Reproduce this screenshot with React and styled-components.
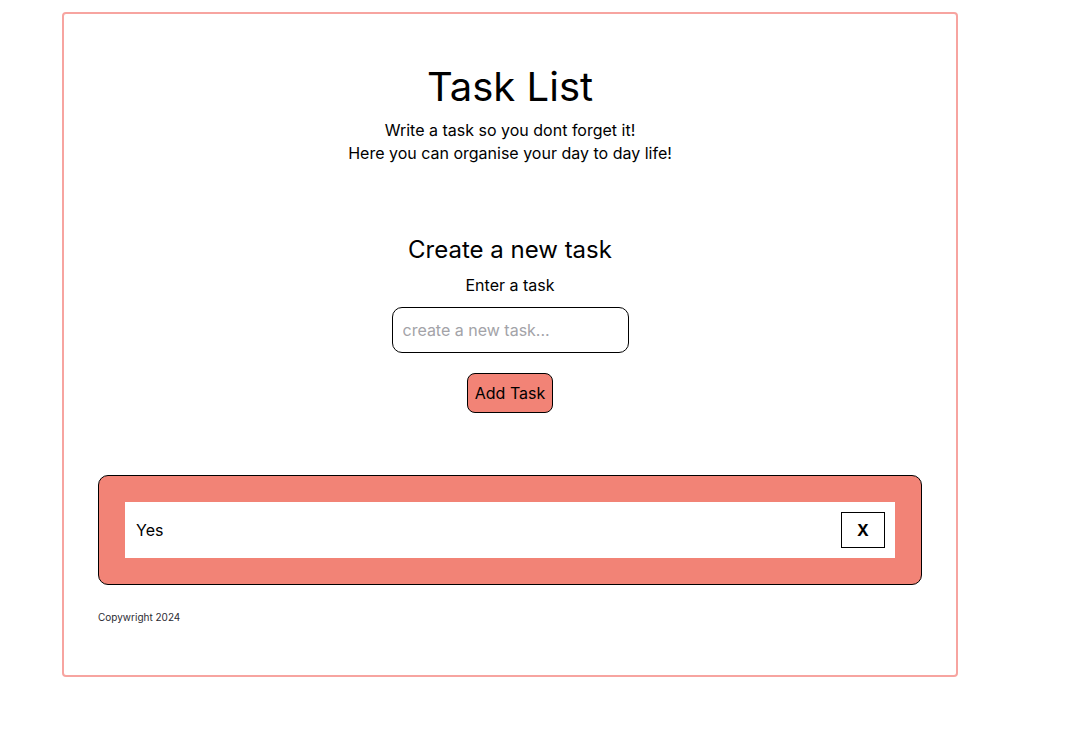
import React, { useState } from "react";
import styled, { createGlobalStyle } from "styled-components";

const GlobalStyle = createGlobalStyle`
  body {
    margin: 0;
    background: #ffffff;
    font-family: Inter, "Noto Sans", sans-serif;
    color: #000000;
  }
  * {
    box-sizing: border-box;
  }
`;

const Card = styled.main`
  width: 896px;
  margin: 12px 0 0 62px;
  padding: 0 34px 52px;
  border: 2px solid #f7a4a0;
  border-radius: 4px;
  display: flex;
  flex-direction: column;
`;

const Header = styled.header`
  padding-top: 49px;
  text-align: center;
`;

const Title = styled.h1`
  margin: 0;
  font-size: 40px;
  font-weight: 400;
  line-height: 48px;
`;

const Intro = styled.p`
  margin: 8px 0 0;
  font-size: 16px;
  line-height: 23px;
`;

const Form = styled.form`
  margin-top: 70px;
  display: flex;
  flex-direction: column;
  align-items: center;
`;

const FormTitle = styled.h2`
  margin: 0;
  font-size: 24px;
  font-weight: 400;
  line-height: 29px;
`;

const Label = styled.label`
  margin-top: 12px;
  font-size: 16px;
  line-height: 19px;
`;

const Input = styled.input`
  margin-top: 12px;
  width: 237px;
  height: 46px;
  padding: 0 10px;
  border: 1px solid #000;
  border-radius: 10px;
  font-family: inherit;
  font-size: 16px;
  outline: none;

  &::placeholder {
    color: #a3a3a8;
  }
`;

const AddButton = styled.button`
  margin-top: 20px;
  height: 40px;
  padding: 0 7px;
  background: #f28376;
  border: 1px solid #000;
  border-radius: 8px;
  font-family: inherit;
  font-size: 16px;
  color: #000;
  cursor: pointer;
`;

const TaskBoard = styled.section`
  margin-top: 62px;
  padding: 26px;
  background: #f28376;
  border: 1px solid #000;
  border-radius: 10px;
  display: flex;
  flex-direction: column;
  gap: 10px;
`;

const TaskRow = styled.div`
  height: 56px;
  padding: 10px 10px 10px 11px;
  background: #ffffff;
  display: flex;
  align-items: center;
  justify-content: space-between;
  font-size: 16px;
`;

const DeleteButton = styled.button`
  width: 44px;
  height: 36px;
  background: #ffffff;
  border: 1px solid #000;
  border-radius: 0;
  font-family: inherit;
  font-size: 16px;
  font-weight: 700;
  color: #000;
  cursor: pointer;
`;

const Footer = styled.footer`
  margin-top: 26px;
  font-size: 10px;
  line-height: 12px;
  color: #2b2b33;
`;

export default function App() {
  const [tasks, setTasks] = useState([{ id: 1, text: "Yes" }]);
  const [value, setValue] = useState("");

  const addTask = (e) => {
    e.preventDefault();
    if (!value.trim()) return;
    setTasks([...tasks, { id: Date.now(), text: value }]);
    setValue("");
  };

  const removeTask = (id) => setTasks(tasks.filter((t) => t.id !== id));

  return (
    <>
      <GlobalStyle />
      <Card>
        <Header>
          <Title>Task List</Title>
          <Intro>
            Write a task so you dont forget it!
            <br />
            Here you can organise your day to day life!
          </Intro>
        </Header>
        <Form onSubmit={addTask}>
          <FormTitle>Create a new task</FormTitle>
          <Label htmlFor="task">Enter a task</Label>
          <Input
            id="task"
            placeholder="create a new task..."
            value={value}
            onChange={(e) => setValue(e.target.value)}
          />
          <AddButton type="submit">Add Task</AddButton>
        </Form>
        <TaskBoard>
          {tasks.map((task) => (
            <TaskRow key={task.id}>
              <span>{task.text}</span>
              <DeleteButton onClick={() => removeTask(task.id)}>X</DeleteButton>
            </TaskRow>
          ))}
        </TaskBoard>
        <Footer>Copywright 2024</Footer>
      </Card>
    </>
  );
}
